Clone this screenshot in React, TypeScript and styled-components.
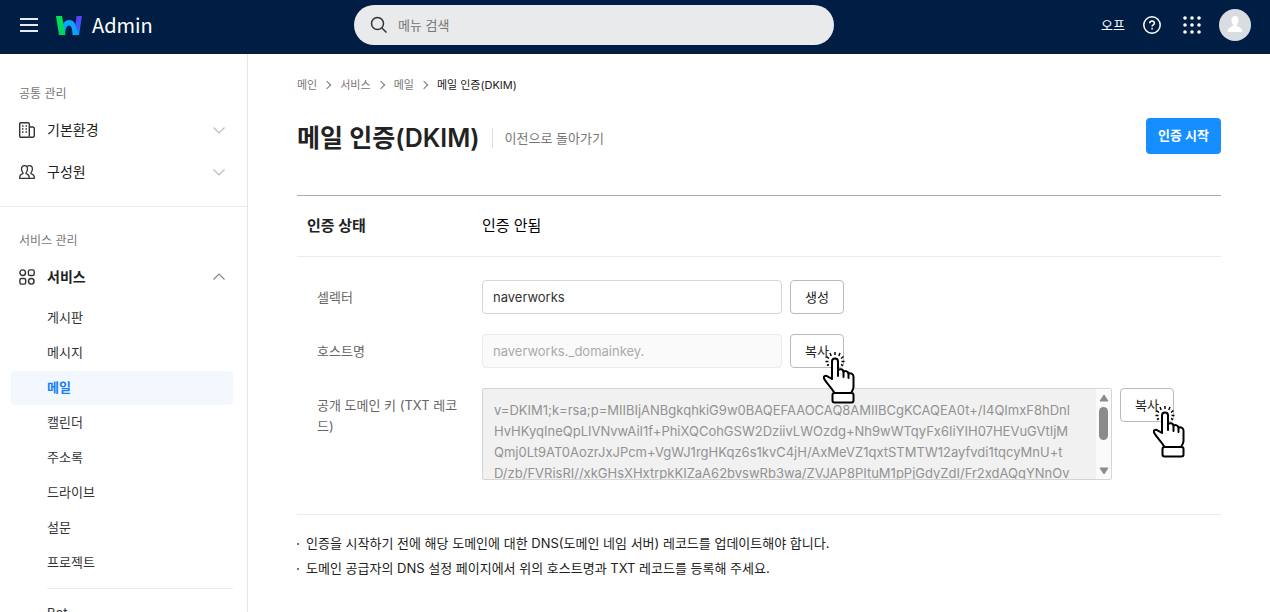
import React from "react";
import styled, { createGlobalStyle, css } from "styled-components";

const kr = `"Noto Sans CJK KR", "Noto Sans", sans-serif`;
const ui = `Inter, "Noto Sans CJK KR", sans-serif`;

const GlobalStyle = createGlobalStyle`
  *, *::before, *::after { box-sizing: border-box; }
  html, body, #root { height: 100%; }
  body { margin: 0; background: #fff; color: #222; font-family: ${ui}; font-size: 14px; line-height: 20px; }
  button, input, textarea { font: inherit; color: inherit; margin: 0; }
  ul, ol, h1, h2, p, dl, dd { margin: 0; padding: 0; }
  ul, ol { list-style: none; }
  a { color: inherit; text-decoration: none; }
  svg { display: block; flex: none; }
`;

const Page = styled.div`
  display: flex;
  flex-direction: column;
  height: 100vh;
  overflow: hidden;
`;

const Header = styled.header`
  display: grid;
  grid-template-columns: 335px minmax(200px, 480px) 1fr;
  align-items: center;
  flex: none;
  height: 54px;
  padding: 0 19px 4px;
  background: #001e43;
  color: #fff;
`;

const HeaderStart = styled.div`
  display: flex;
  align-items: center;
`;

const HeaderEnd = styled.div`
  display: flex;
  align-items: center;
  justify-content: flex-end;
  font-size: 13px;
  gap: 18px;
`;

const ToolGroup = styled.div`
  display: flex;
  gap: 22px;
`;

const IconButton = styled.button`
  display: flex;
  padding: 0;
  border: 0;
  background: none;
  cursor: pointer;
`;

const Brand = styled.a`
  display: flex;
  align-items: center;
  gap: 10px;
  margin-left: 17px;
  font-family: ${kr};
  font-size: 20px;
  line-height: 24px;
`;

const SearchBox = styled.label`
  display: flex;
  align-items: center;
  gap: 10px;
  height: 40px;
  padding: 0 16px;
  border-radius: 20px;
  background: #e8eaec;
  color: #333;
`;

const SearchInput = styled.input`
  flex: 1;
  min-width: 0;
  padding: 0;
  border: 0;
  outline: 0;
  background: none;
  font-size: 13px;
  &::placeholder { color: #777; opacity: 1; }
`;

const Body = styled.div`
  display: flex;
  flex: 1;
  min-height: 0;
`;

const Sidebar = styled.nav`
  flex: none;
  width: 248px;
  overflow: hidden;
  border-right: 1px solid #e5e5e5;
`;

const Section = styled.section`
  padding: 30px 14px 13px 11px;
  & + & { border-top: 1px solid #ebebeb; padding-top: 24px; }
`;

const SectionTitle = styled.h2`
  padding-left: 8px;
  font-size: 12px;
  font-weight: 400;
  line-height: 20px;
  color: #777;
`;

const MenuButton = styled.button<{ $open?: boolean }>`
  display: flex;
  align-items: center;
  gap: 12px;
  width: 100%;
  height: 42px;
  padding: 0 8px;
  border: 0;
  background: none;
  color: #222;
  font-weight: ${(p) => (p.$open ? 700 : 400)};
  text-align: left;
  cursor: pointer;
`;

const MenuLabel = styled.span`
  flex: 1;
`;

const GroupRow = styled.div`
  padding-top: 5px;
`;

const SubList = styled.ul`
  && { padding-top: 3px; }
`;

const SubItem = styled.a<{ $active?: boolean }>`
  display: flex;
  align-items: center;
  height: 34px;
  margin-bottom: 1px;
  padding: 0 0 2px 36px;
  border-radius: 4px;
  font-size: 13px;
  color: #333;
  ${(p) =>
    p.$active &&
    css`
      background: #f3f8ff;
      color: #157efb;
      font-weight: 700;
    `}
`;

const SubDivider = styled.hr`
  height: 1px;
  margin: 8px 0 8px 36px;
  border: 0;
  background: #ebebeb;
`;

const Main = styled.main`
  flex: 1;
  min-width: 0;
  padding: 21px 49px 0;
`;

const Crumbs = styled.ol`
  display: flex;
  align-items: center;
  font-size: 11px;
  line-height: 20px;
  color: #777;
`;

const Crumb = styled.li`
  display: flex;
  align-items: center;
  & + &::before {
    content: "";
    width: 6px;
    height: 6px;
    margin: 0 10px 0 7px;
    border: solid #777;
    border-width: 1px 1px 0 0;
    transform: rotate(45deg);
  }
  &:last-child { color: #222; }
`;

const TitleRow = styled.div`
  display: flex;
  align-items: center;
  justify-content: space-between;
  margin-top: 23px;
  height: 36px;
`;

const TitleGroup = styled.div`
  display: flex;
  align-items: center;
  padding-top: 3px;
`;

const Title = styled.h1`
  font-size: 25px;
  line-height: 36px;
  font-weight: 600;
`;

const BackLink = styled.a`
  margin-left: 12px;
  padding-left: 12px;
  border-left: 1px solid #ddd;
  font-size: 13px;
  color: #777;
`;

const PrimaryButton = styled.button`
  height: 36px;
  padding: 0 12px 2px;
  border: 0;
  border-radius: 4px;
  background: #158fff;
  color: #fff;
  font-size: 13px;
  font-weight: 700;
  cursor: pointer;
`;

const Panel = styled.section`
  margin-top: 41px;
  border-top: 1px solid #aaa;
  border-bottom: 1px solid #ebebeb;
`;

const StatusRow = styled.dl`
  display: flex;
  height: 61px;
  align-items: center;
  border-bottom: 1px solid #ebebeb;
  && { padding-left: 10px; }
  font-size: 15px;
`;

const StatusTerm = styled.dt`
  width: 175px;
  font-weight: 700;
`;

const StatusValue = styled.dd`
  color: #000;
`;

const Fields = styled.div`
  display: flex;
  flex-direction: column;
  gap: 20px;
  padding: 23px 0 34px 20px;
`;

const Field = styled.div`
  display: flex;
  align-items: flex-start;
  gap: 8px;
`;

const FieldLabel = styled.label`
  flex: none;
  width: 157px;
  padding: 7px 12px 0 0;
  font-size: 13px;
  line-height: 21px;
  color: #666;
`;

const TextInput = styled.input`
  width: 300px;
  height: 34px;
  padding: 0 10px;
  border: 1px solid #d5d5d5;
  border-radius: 4px;
  background: #fff;
  color: #333;
  font-size: 13px;
  outline: 0;
  &:disabled { border-color: #ebebeb; background: #fafafa; color: #aaa; }
`;

const KeyBox = styled.div`
  display: flex;
  flex: 0 1 630px;
  height: 92px;
  border: 1px solid #d5d5d5;
  border-radius: 2px;
  background: #f1f1f1;
`;

const KeyText = styled.textarea`
  flex: 1;
  min-width: 0;
  padding: 11px 0 0 11px;
  border: 0;
  outline: 0;
  resize: none;
  overflow: hidden;
  white-space: pre;
  background: none;
  color: #929292;
  font-size: 13px;
  line-height: 21px;
`;

const ScrollTrack = styled.div`
  display: flex;
  flex-direction: column;
  align-items: center;
  width: 15px;
  padding: 5px 0 4px;
  background: #fafafa;
  color: #8b8b8b;
`;

const ScrollThumb = styled.div`
  width: 9px;
  height: 33px;
  margin: 5px 0 auto;
  border-radius: 5px;
  background: #8b8b8b;
`;

const ButtonWrap = styled.div`
  position: relative;
`;

const SmallButton = styled.button`
  width: 54px;
  height: 34px;
  padding: 0;
  border: 1px solid #bbb;
  border-radius: 4px;
  background: #fff;
  font-size: 13px;
  cursor: pointer;
`;

const Pointer = styled.svg`
  position: absolute;
  left: 33px;
  top: 18px;
  pointer-events: none;
`;

const Notes = styled.ul`
  && { padding-top: 16px; }
  font-size: 13px;
  line-height: 25px;
`;

const Note = styled.li`
  display: flex;
  align-items: center;
  gap: 7px;
  &::before { content: ""; width: 2px; height: 2px; background: #777; }
`;

const Hamburger = () => (
  <svg width="20" height="16" viewBox="0 0 20 16" fill="#e8eaee">
    <path d="M1 1h18v2H1zM1 7h18v2H1zM1 13h18v2H1z" />
  </svg>
);

const Logo = () => (
  <svg width="26" height="19" viewBox="0 0 26 19">
    <defs>
      <linearGradient id="g" x1="0" y1="0" x2="0" y2="1">
        <stop offset="0" stopColor="#00e650" />
        <stop offset="1" stopColor="#00cf6a" />
      </linearGradient>
      <linearGradient id="v" x1="0" y1="0" x2="0" y2="1">
        <stop offset="0" stopColor="#5b3df5" />
        <stop offset=".6" stopColor="#3c5bff" />
        <stop offset="1" stopColor="#0aa5ff" />
      </linearGradient>
    </defs>
    <path d="M20.500 0H26l-3 19h-5z" fill="url(#v)" />
    <path d="M6.500 10C7.500 6 9.500 4 13 4c5 0 8 4 8 15h-4.500c0-6-1.100-9.500-3.500-9.500S9.500 13 9 18z" fill="#0aa5ff" />
    <path d="M0 0h6l3.500 19H3z" fill="url(#g)" />
  </svg>
);

const SearchIcon = () => (
  <svg width="18" height="18" viewBox="0 0 18 18" fill="none" stroke="#333" strokeWidth="1.500">
    <circle cx="7.500" cy="7.500" r="6" />
    <path d="M12 12l4.500 4.500" />
  </svg>
);

const HelpIcon = () => (
  <svg width="18" height="18" viewBox="0 0 18 18" fill="none" stroke="#fff" strokeWidth="1.500">
    <circle cx="9" cy="9" r="8.200" />
    <path d="M6.700 7.300c0-3 4.700-3 4.700 0 0 1.600-2.300 1.600-2.300 3.200" />
    <path d="M9.100 11.800v1.600" />
  </svg>
);

const AppsIcon = () => (
  <svg width="18" height="18" viewBox="0 0 18 18" fill="#fff">
    {[2, 9, 16].map((y) => [2, 9, 16].map((x) => <circle key={`${x}-${y}`} cx={x} cy={y} r="1.800" />))}
  </svg>
);

const Avatar = () => (
  <svg width="32" height="32" viewBox="0 0 32 32">
    <circle cx="16" cy="16" r="16" fill="#d9dce0" />
    <path d="M16 7c2.300 0 3.500 1.700 3.500 4.200 0 2-.6 3.400-1.500 4.300v1.700c3 .8 5.300 1.800 5.300 5.800H8.700c0-4 2.300-5 5.300-5.800v-1.700c-.9-.9-1.500-2.300-1.500-4.300C12.500 8.700 13.700 7 16 7z" fill="#fff" />
  </svg>
);

const BuildingIcon = () => (
  <svg width="16" height="16" viewBox="0 0 16 16" fill="none" stroke="#333" strokeWidth="1.400">
    <rect x=".7" y=".7" width="9.600" height="14.600" rx="1.200" />
    <path d="M10.300 5h3.500a1.500 1.500 0 0 1 1.500 1.500v7.300a1.500 1.500 0 0 1-1.500 1.500h-3.500" />
    <path d="M3 4h1.500M6.500 4H8M3 7h1.500M6.500 7H8M3 10h1.500M6.500 10H8" />
  </svg>
);

const PeopleIcon = () => (
  <svg width="16" height="16" viewBox="0 0 16 16" fill="none" stroke="#333" strokeWidth="1.300" strokeLinejoin="round">
    <path d="M5.500 1.600c1.900 0 3 1.300 3 3.300 0 1.600-.6 2.900-1.400 3.700v1.100c2 .6 3.200 1.700 3.200 4.600H.6c0-2.900 1.300-4 3.300-4.600V8.600C3.100 7.800 2.500 6.500 2.500 4.900c0-2 1.100-3.300 3-3.300z" />
    <path d="M8.200 2.300c.5-.5 1.300-.7 2.200-.7 1.900 0 3 1.300 3 3.300 0 1.600-.6 2.900-1.400 3.700v1.100c2 .6 3.400 1.700 3.400 4.600h-5" />
  </svg>
);

const ServiceIcon = () => (
  <svg width="16" height="16" viewBox="0 0 16 16" fill="none" stroke="#333" strokeWidth="1.400">
    <circle cx="3.700" cy="3.700" r="2.800" />
    <rect x="9.400" y=".9" width="5.800" height="5.600" rx="1.600" />
    <rect x=".9" y="9.500" width="5.800" height="5.600" rx="1.600" />
    <circle cx="12.300" cy="12.300" r="2.800" />
  </svg>
);

const Chevron = ({ up }: { up?: boolean }) => (
  <svg width="12" height="8" viewBox="0 0 12 8" fill="none" stroke={up ? "#888" : "#bbb"} strokeWidth="1.200">
    <path d={up ? "M.5 6.500L6 1l5.500 5.500" : "M.5 1.500L6 7l5.500-5.500"} />
  </svg>
);

const Triangle = ({ down }: { down?: boolean }) => (
  <svg width="10" height="8" viewBox="0 0 10 8" fill="currentColor" stroke="currentColor" strokeLinejoin="round">
    <path d={down ? "M1 1h8L5 7z" : "M1 7h8L5 1z"} />
  </svg>
);

const ClickHand = () => (
  <Pointer width="34" height="54" viewBox="0 0 34 54" aria-hidden="true">
    <g fill="none" stroke="#000" strokeWidth="1.500">
      <path d="M12 0v3M7 1l1.200 3M17 1l-1.200 3M3.500 4.500l2.500 2M20.500 4.500l-2.500 2M2.500 9.500h3M18.500 9.500h3M4 13.500l2-1M20 13.500l-2-1" />
    </g>
    <g fill="#fff" stroke="#000" strokeWidth="2" strokeLinejoin="round" strokeLinecap="round">
      <path d="M9 27V9.500a3 3 0 0 1 6 0V18c2-1.500 5-1 5.500 1.500 2-1 4.500 0 5 2 2.500-.8 5 .5 5 3V35c0 2.500-1.500 4-2.500 6H11.500C8.500 35.500 3.500 31.500 1 26.500c-.8-2 1.500-3.500 3.500-2.200z" />
      <path d="M15 18v6M20.500 19.500V25M25.500 21.500V26" fill="none" />
      <rect x="9.500" y="41" width="21" height="9.500" rx="2" />
    </g>
  </Pointer>
);

const services = ["게시판", "메시지", "메일", "캘린더", "주소록", "드라이브", "설문", "프로젝트"];

const publicKey = [
  "v=DKIM1;k=rsa;p=MIIBIjANBgkqhkiG9w0BAQEFAAOCAQ8AMIIBCgKCAQEA0t+/I4QImxF8hDnl",
  "HvHKyqIneQpLIVNvwAiI1f+PhiXQCohGSW2DziivLWOzdg+Nh9wWTqyFx6IiYIH07HEVuGVtIjM",
  "Qmj0Lt9AT0AozrJxJPcm+VgWJ1rgHKqz6s1kvC4jH/AxMeVZ1qxtSTMTW12ayfvdi1tqcyMnU+t",
  "D/zb/FVRisRI//xkGHsXHxtrpkKIZaA62bvswRb3wa/ZVJAP8PItuM1pPjGdyZdI/Fr2xdAQqYNnOv",
].join("\n");

export default function App() {
  return (
    <Page>
      <GlobalStyle />
      <Header>
        <HeaderStart>
          <IconButton type="button" aria-label="메뉴"><Hamburger /></IconButton>
          <Brand href="#"><Logo />Admin</Brand>
        </HeaderStart>
        <SearchBox>
          <SearchIcon />
          <SearchInput type="search" placeholder="메뉴 검색" aria-label="메뉴 검색" />
        </SearchBox>
        <HeaderEnd>
          <a href="#">오프</a>
          <ToolGroup>
            <IconButton type="button" aria-label="도움말"><HelpIcon /></IconButton>
            <IconButton type="button" aria-label="앱"><AppsIcon /></IconButton>
          </ToolGroup>
          <IconButton type="button" aria-label="프로필"><Avatar /></IconButton>
        </HeaderEnd>
      </Header>
      <Body>
        <Sidebar>
          <Section>
            <SectionTitle>공통 관리</SectionTitle>
            <GroupRow>
              <MenuButton type="button"><BuildingIcon /><MenuLabel>기본환경</MenuLabel><Chevron /></MenuButton>
              <MenuButton type="button"><PeopleIcon /><MenuLabel>구성원</MenuLabel><Chevron /></MenuButton>
            </GroupRow>
          </Section>
          <Section>
            <SectionTitle>서비스 관리</SectionTitle>
            <GroupRow>
              <MenuButton type="button" $open><ServiceIcon /><MenuLabel>서비스</MenuLabel><Chevron up /></MenuButton>
            </GroupRow>
            <SubList>
              {services.map((name) => (
                <li key={name}><SubItem href="#" $active={name === "메일"}>{name}</SubItem></li>
              ))}
            </SubList>
            <SubDivider />
            <SubItem href="#">Bot</SubItem>
          </Section>
        </Sidebar>
        <Main>
          <Crumbs>
            <Crumb><a href="#">메인</a></Crumb>
            <Crumb><a href="#">서비스</a></Crumb>
            <Crumb><a href="#">메일</a></Crumb>
            <Crumb>메일 인증(DKIM)</Crumb>
          </Crumbs>
          <TitleRow>
            <TitleGroup>
              <Title>메일 인증(DKIM)</Title>
              <BackLink href="#">이전으로 돌아가기</BackLink>
            </TitleGroup>
            <PrimaryButton type="button">인증 시작</PrimaryButton>
          </TitleRow>
          <Panel>
            <StatusRow>
              <StatusTerm>인증 상태</StatusTerm>
              <StatusValue>인증 안됨</StatusValue>
            </StatusRow>
            <Fields>
              <Field>
                <FieldLabel htmlFor="selector">셀렉터</FieldLabel>
                <TextInput id="selector" defaultValue="naverworks" />
                <SmallButton type="button">생성</SmallButton>
              </Field>
              <Field>
                <FieldLabel htmlFor="host">호스트명</FieldLabel>
                <TextInput id="host" defaultValue="naverworks._domainkey." disabled />
                <ButtonWrap><SmallButton type="button">복사</SmallButton><ClickHand /></ButtonWrap>
              </Field>
              <Field>
                <FieldLabel htmlFor="key">공개 도메인 키 (TXT 레코드)</FieldLabel>
                <KeyBox>
                  <KeyText id="key" readOnly wrap="off" defaultValue={publicKey} />
                  <ScrollTrack><Triangle /><ScrollThumb /><Triangle down /></ScrollTrack>
                </KeyBox>
                <ButtonWrap><SmallButton type="button">복사</SmallButton><ClickHand /></ButtonWrap>
              </Field>
            </Fields>
          </Panel>
          <Notes>
            <Note>인증을 시작하기 전에 해당 도메인에 대한 DNS(도메인 네임 서버) 레코드를 업데이트해야 합니다.</Note>
            <Note>도메인 공급자의 DNS 설정 페이지에서 위의 호스트명과 TXT 레코드를 등록해 주세요.</Note>
          </Notes>
        </Main>
      </Body>
    </Page>
  );
}
